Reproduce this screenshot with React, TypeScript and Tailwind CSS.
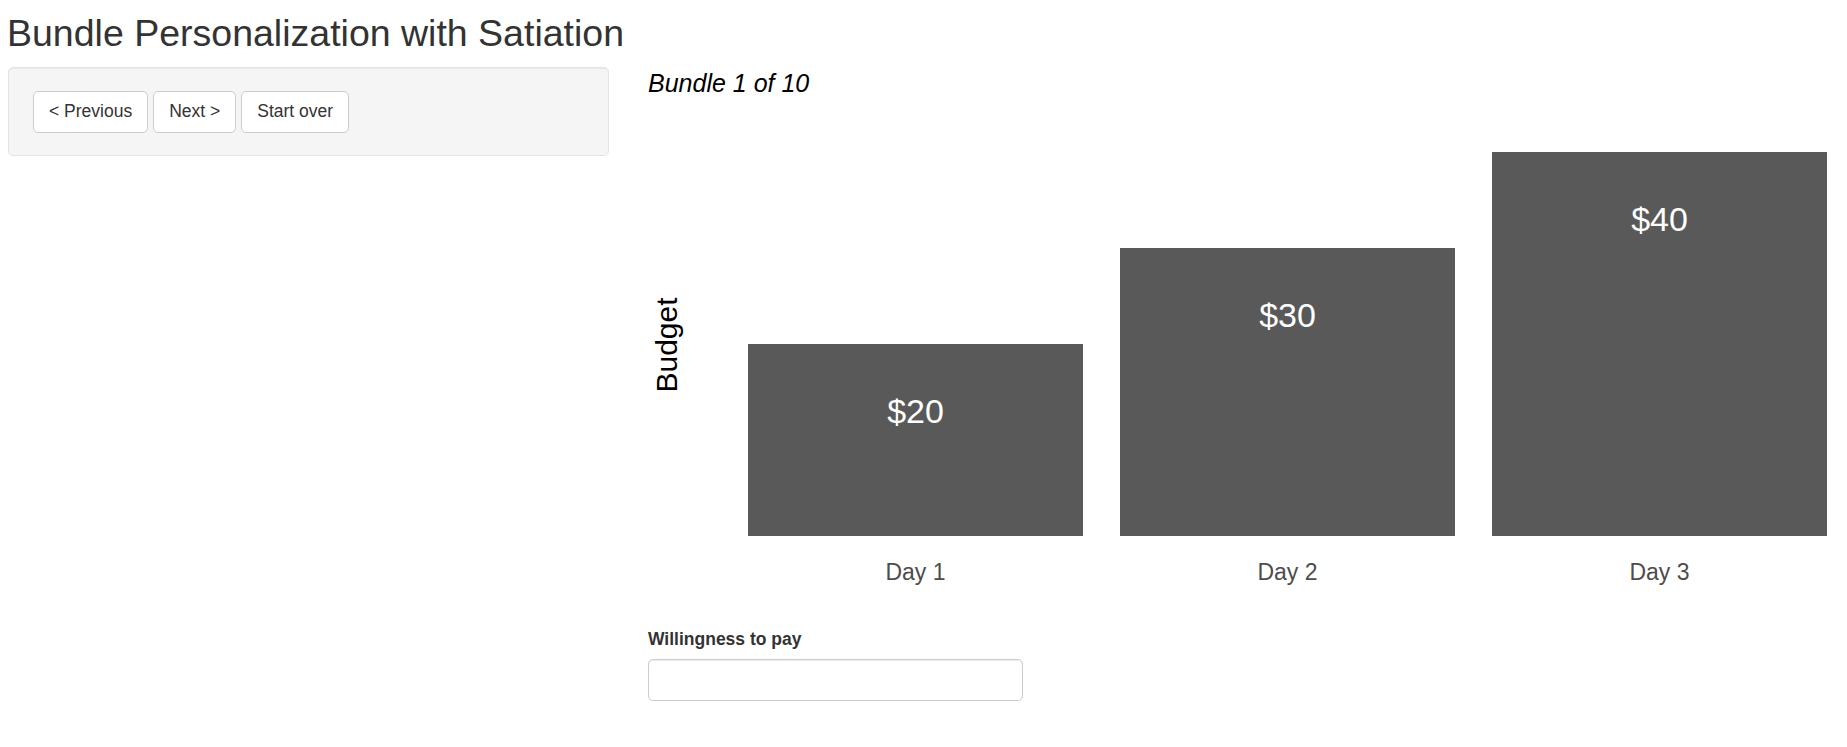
import React from "react";

const FONT = { fontFamily: '"Liberation Sans", Arial, Helvetica, sans-serif' };

function Chart() {
  const bars = [
    { x: 100, top: 245, label: "$20", day: "Day 1" },
    { x: 472, top: 149, label: "$30", day: "Day 2" },
    { x: 844, top: 53, label: "$40", day: "Day 3" },
  ];
  const bottom = 437;
  const w = 335;
  return (
    <svg width={1191} height={510} className="block" style={FONT}>
      <text
        x={29}
        y={246}
        transform="rotate(-90 29 246)"
        textAnchor="middle"
        fontSize={30}
        fill="#000000"
      >
        Budget
      </text>
      {bars.map((b) => (
        <g key={b.day}>
          <rect x={b.x} y={b.top} width={w} height={bottom - b.top} fill="#595959" />
          <text x={b.x + w / 2} y={b.top + 79} textAnchor="middle" fontSize={34} fill="#ffffff">
            {b.label}
          </text>
          <text x={b.x + w / 2} y={481} textAnchor="middle" fontSize={23} fill="#4d4d4d">
            {b.day}
          </text>
        </g>
      ))}
    </svg>
  );
}

export default function App() {
  return (
    <div className="min-h-screen bg-white px-[8px] text-[#333333]" style={FONT}>
      <h2 className="ml-[-1px] mt-[13px] mb-[13px] text-[37.5px] leading-[41.25px] font-normal text-[#333333]">
        Bundle Personalization with Satiation
      </h2>
      <div className="flex items-start">
        <div className="w-[601px] shrink-0 rounded-[5px] border border-[#e3e3e3] bg-[#f5f5f5] px-[24px] py-[22.5px] shadow-[inset_0_1px_1px_rgba(0,0,0,0.05)]">
          <div className="flex gap-[5px]">
            {["< Previous", "Next >", "Start over"].map((t) => (
              <button
                key={t}
                className="rounded-[5px] border border-[#cccccc] bg-white px-[15px] py-[7.5px] text-[17.5px] leading-[25px] text-[#333333]"
              >
                {t}
              </button>
            ))}
          </div>
        </div>
        <div className="ml-[39px] flex-1">
          <div className="mt-[1px] text-[25px] italic leading-[30px] text-black">Bundle 1 of 10</div>
          <div className="mt-[1px]">
            <Chart />
          </div>
          <label className="mt-[18px] block text-[17.5px] font-bold leading-[25px] text-[#333333]">
            Willingness to pay
          </label>
          <input
            type="text"
            className="mt-[6.5px] block h-[42px] w-[375px] rounded-[5px] border border-[#cccccc] bg-white px-[15px] text-[17.5px] shadow-[inset_0_1px_1px_rgba(0,0,0,0.075)] outline-none"
          />
        </div>
      </div>
    </div>
  );
}
